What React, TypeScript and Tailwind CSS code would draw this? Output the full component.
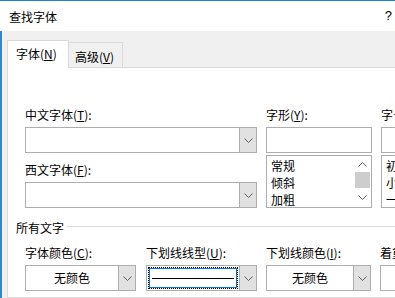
import React from "react";

const cjk = "font-['Noto_Sans_CJK_SC','Microsoft_YaHei',sans-serif]";

function Chevron({ up }: { up?: boolean }) {
  return (
    <svg width="9" height="5" viewBox="0 0 9 5" className={up ? "rotate-180" : ""}>
      <path d="M0.5 0.5 L4.5 4.5 L8.5 0.5" fill="none" stroke="#5f5f5f" strokeWidth="1" />
    </svg>
  );
}

function Label({ text, k }: { text: string; k?: string }) {
  return (
    <div className="h-[17px] leading-[17px] whitespace-nowrap">
      {text}
      {k && (
        <>
          (<u>{k}</u>):
        </>
      )}
    </div>
  );
}

function Combo({ children, center }: { children?: React.ReactNode; center?: boolean }) {
  return (
    <div className="mt-[4px] flex h-[26px] border border-[#adadad] bg-white">
      <div
        className={`flex min-w-0 flex-1 items-center ${center ? "justify-center" : "px-[3px]"}`}
      >
        {children}
      </div>
      <div className="flex w-[17px] items-center justify-center border-l border-[#adadad] bg-[#e1e1e1]">
        <Chevron />
      </div>
    </div>
  );
}

function TextBox() {
  return <div className="mt-[4px] h-[26px] border border-[#adadad] bg-white" />;
}

function ListBox({ items, scroll }: { items: string[]; scroll?: boolean }) {
  return (
    <div className="mt-[2px] flex h-[53px] overflow-hidden border border-[#adadad] bg-white">
      <div className="flex-1 pl-[4px] pt-[1px]">
        {items.map((it) => (
          <div key={it} className="h-[17px] leading-[17px] whitespace-nowrap">
            {it}
          </div>
        ))}
      </div>
      {scroll && (
        <div className="flex w-[17px] flex-col items-center">
          <div className="flex h-[16px] items-center justify-center">
            <Chevron up />
          </div>
          <div className="h-[16px] w-[15px] bg-[#cdcdcd]" />
          <div className="flex flex-1 items-center justify-center">
            <Chevron />
          </div>
        </div>
      )}
    </div>
  );
}

export default function App() {
  return (
    <div className={`flex h-[298px] w-[395px] flex-col overflow-hidden text-[12px] text-black ${cjk}`}>
      <div className="flex h-[31px] shrink-0 items-center justify-between border-t border-[#1883d7] bg-white pl-[9px] pr-[3px]">
        <span className="leading-[17px]">查找字体</span>
        <span className="font-['Liberation_Sans',sans-serif] text-[13px]">?</span>
      </div>
      <div className="flex flex-1 flex-col border-l-2 border-[#2b88d8] bg-[#f0f0f0] pl-[5px] pt-[9px]">
        <div className="flex items-end">
          <div className="relative z-10 -mb-px h-[28px] w-[62px] border border-b-0 border-[#d9d9d9] bg-white pl-[8px] pt-[4px]">
            <div className="h-[17px] leading-[17px] whitespace-nowrap">
              字体(<u>N</u>)
            </div>
          </div>
          <div className="-ml-px h-[25px] w-[55px] border border-b-0 border-[#d9d9d9] bg-[#f0f0f0] pl-[6px] pt-[5px]">
            <div className="h-[17px] leading-[17px] whitespace-nowrap">
              高级(<u>V</u>)
            </div>
          </div>
        </div>
        <div className="w-[480px] flex-1 border border-[#d9d9d9] bg-white pl-[8px] pt-[38px]">
          <div className="flex gap-[9px] pl-[9px]">
            <div className="w-[232px]">
              <Label text="中文字体" k="T" />
              <Combo />
              <div className="mt-[8px]">
                <Label text="西文字体" k="F" />
              </div>
              <Combo />
            </div>
            <div className="w-[106px]">
              <Label text="字形" k="Y" />
              <TextBox />
              <ListBox items={["常规", "倾斜", "加粗"]} scroll />
            </div>
            <div className="w-[90px]">
              <Label text="字号" k="S" />
              <TextBox />
              <ListBox items={["初号", "小初", "一号"]} scroll />
            </div>
          </div>
          <div className="mt-[11px] flex h-[17px] items-center gap-[3px]">
            <span className="leading-[17px]">所有文字</span>
            <div className="mt-[-2px] h-px flex-1 bg-[#dcdcdc]" />
          </div>
          <div className="mt-[8px] flex pl-[9px]">
            <div className="w-[111px]">
              <Label text="字体颜色" k="C" />
              <Combo center>无颜色</Combo>
            </div>
            <div className="ml-[10px] w-[111px]">
              <Label text="下划线线型" k="U" />
              <div className="mt-[4px] flex h-[26px] border border-[#adadad] bg-white">
                <div className="flex min-w-0 flex-1 p-[1px]">
                  <div className="flex-1 border border-dotted border-black">
                    <div className="flex h-full items-center border border-[#0078d7] px-[2px]">
                      <div className="h-px w-full bg-black" />
                    </div>
                  </div>
                </div>
                <div className="flex w-[17px] items-center justify-center border-l border-[#adadad] bg-[#e1e1e1]">
                  <Chevron />
                </div>
              </div>
            </div>
            <div className="ml-[9px] w-[105px]">
              <Label text="下划线颜色" k="I" />
              <Combo center>无颜色</Combo>
            </div>
            <div className="ml-[9px] w-[100px]">
              <Label text="着重号" k="·" />
              <Combo center>(无)</Combo>
            </div>
          </div>
        </div>
      </div>
    </div>
  );
}
